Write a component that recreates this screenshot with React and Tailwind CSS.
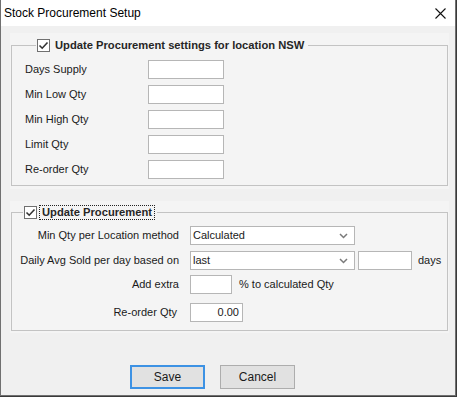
import React from "react";

const Check = () => (
  <span className="w-[13px] h-[13px] border border-[#707070] bg-white flex items-center justify-center shrink-0">
    <svg width="11" height="11" viewBox="0 0 11 11">
      <path d="M1.5 5.5 L4.2 8.2 L9.5 2.5" fill="none" stroke="#333" strokeWidth="1.6" />
    </svg>
  </span>
);

const Chevron = () => (
  <svg width="9" height="6" viewBox="0 0 9 6" className="shrink-0">
    <path d="M1 1 L4.5 4.5 L8 1" fill="none" stroke="#7a7a7a" strokeWidth="1.5" />
  </svg>
);

const Box = ({ className = "", children }) => (
  <div className={`h-[19px] bg-white border border-[#b6b6b6] flex items-center ${className}`}>
    {children}
  </div>
);

const Select = ({ value }) => (
  <Box className="w-[165px] pl-[2px] pr-[6px] justify-between">
    <span>{value}</span>
    <Chevron />
  </Box>
);

const topFields = ["Days Supply", "Min Low Qty", "Min High Qty", "Limit Qty", "Re-order Qty"];

export default function App() {
  return (
    <div className="w-[457px] h-[397px] bg-[#3a3a3a] font-['Liberation_Sans',Arial,sans-serif] text-[11px] text-[#1a1a1a]">
      <div className="w-[456px] h-[396px] bg-[#f0f0f0] border-l border-r border-b border-[#707070] flex flex-col">
        <div className="h-[26px] bg-white flex items-center justify-between pl-[3px] pr-[9px]">
          <span className="text-[12px] text-black">Stock Procurement Setup</span>
          <svg width="11" height="11" viewBox="0 0 11 11">
            <path d="M0.5 0.5 L10.5 10.5 M10.5 0.5 L0.5 10.5" stroke="#111" strokeWidth="1.1" />
          </svg>
        </div>

        <div className="pl-[9px] pr-[6px]">
          <div className="mt-[7px] bg-[#f4f4f4] px-[1px] pt-[4px] pb-[3px]">
            <fieldset className="border border-[#c3c3c3] pl-[13px] pt-[7px] pb-[6px]">
              <legend className="ml-[11px] pl-[1px] pr-[4px] flex items-center gap-[5px] h-[16px]">
                <Check />
                <span className="font-bold text-[11.2px] text-[#262626]">
                  Update Procurement settings for location NSW
                </span>
              </legend>
              <div className="flex flex-col gap-[6px]">
                {topFields.map((f) => (
                  <div key={f} className="flex items-center">
                    <span className="w-[123px]">{f}</span>
                    <Box className="w-[76px]" />
                  </div>
                ))}
              </div>
            </fieldset>
          </div>

          <div className="mt-[12px] bg-[#f4f4f4] px-[1px] pt-[3px] pb-[2px]">
            <fieldset className="border border-[#c3c3c3] pt-[6px] pb-[8px]">
              <legend className="ml-[11px] pl-[1px] pr-[2px] flex items-center gap-[2px] h-[16px]">
                <Check />
                <span className="font-bold text-[11.2px] text-[#262626] border border-dotted border-[#222] px-[2px] leading-[13px]">
                  Update Procurement
                </span>
              </legend>
              <div className="flex items-center">
                <span className="w-[167px] text-right">Min Qty per Location method</span>
                <div className="ml-[11px]">
                  <Select value="Calculated" />
                </div>
              </div>
              <div className="flex items-center mt-[6px]">
                <span className="w-[167px] text-right">Daily Avg Sold per day based on</span>
                <div className="ml-[11px] flex items-center">
                  <Select value="last" />
                  <Box className="w-[54px] ml-[3px]" />
                  <span className="ml-[6px]">days</span>
                </div>
              </div>
              <div className="flex items-center mt-[5px]">
                <span className="w-[167px] text-right">Add extra</span>
                <div className="ml-[11px] flex items-center">
                  <Box className="w-[42px]" />
                  <span className="ml-[7px]">% to calculated Qty</span>
                </div>
              </div>
              <div className="flex items-center mt-[9px]">
                <span className="w-[165px] text-right">Re-order Qty</span>
                <div className="ml-[13px]">
                  <Box className="w-[53px] justify-end pr-[3px]">0.00</Box>
                </div>
              </div>
            </fieldset>
          </div>
        </div>

        <div className="mt-[32px] pl-[129px] flex gap-[15px]">
          <button className="w-[75px] h-[24px] bg-[#e1e1e1] border-2 border-[#3d92e4] text-[12px] text-[#1a1a1a]">
            Save
          </button>
          <button className="w-[75px] h-[24px] bg-[#e1e1e1] border border-[#adadad] text-[12px] text-[#1a1a1a]">
            Cancel
          </button>
        </div>
      </div>
    </div>
  );
}
